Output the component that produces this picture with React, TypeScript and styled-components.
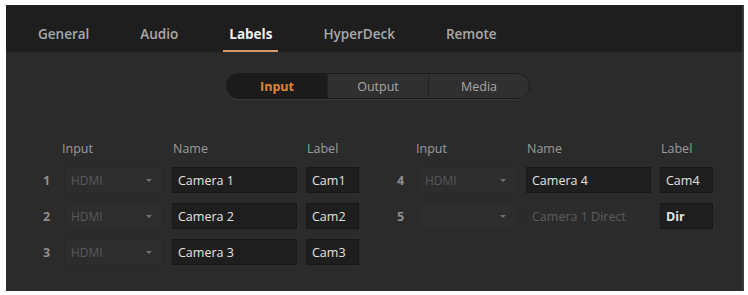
import React from "react";
import styled, { createGlobalStyle } from "styled-components";

const GlobalStyle = createGlobalStyle`
  html, body {
    margin: 0;
    padding: 0;
    background: #ffffff;
  }
  body {
    font-family: "Open Sans", "Liberation Sans", sans-serif;
  }
`;

const Panel = styled.div`
  margin: 5px 0 0 6px;
  width: 738px;
  height: 286px;
  background: #2b2b2b;
  border-right: 2px solid #3a3a3a;
  box-sizing: border-box;
  display: flex;
  flex-direction: column;
`;

const TabBar = styled.div`
  height: 47px;
  background: #1e1e1e;
  display: flex;
  padding-left: 26px;
  gap: 39px;
`;

const Tab = styled.div<{ active?: boolean }>`
  box-sizing: border-box;
  height: 47px;
  padding: 22px 6px 0;
  line-height: 14px;
  font-size: 13.5px;
  font-weight: ${(p) => (p.active ? 700 : 600)};
  color: ${(p) => (p.active ? "#f2f2f2" : "#a9a9a9")};
  border-bottom: 2px solid ${(p) => (p.active ? "#d69a68" : "transparent")};
`;

const Body = styled.div`
  display: flex;
  flex-direction: column;
`;

const SegmentRow = styled.div`
  display: flex;
  justify-content: center;
  padding-left: 8px;
  margin-top: 21px;
`;

const Segmented = styled.div`
  display: flex;
  height: 24px;
  border-radius: 12px;
  background: #303030;
  border: 1px solid #1b1b1b;
  overflow: hidden;
  box-shadow: 0 1px 0 #363636;
`;

const Segment = styled.div<{ active?: boolean }>`
  width: 100px;
  display: flex;
  align-items: center;
  justify-content: center;
  font-size: 12.5px;
  font-weight: ${(p) => (p.active ? 700 : 400)};
  color: ${(p) => (p.active ? "#e8822e" : "#a8a8a8")};
  background: ${(p) => (p.active ? "#1b1b1b" : "transparent")};
  & + & {
    border-left: 1px solid #232323;
  }
`;

const Table = styled.div`
  display: flex;
  gap: 35px;
  padding-left: 34px;
  margin-top: 42px;
`;

const Group = styled.div`
  display: grid;
  grid-template-columns: 15px 99px 125px 53px;
  column-gap: 9px;
  row-gap: 10px;
  grid-auto-rows: 26px;
  grid-template-rows: 16px;
`;

const ColHead = styled.div<{ col: number }>`
  grid-column: ${(p) => p.col};
  font-size: 12.5px;
  line-height: 16px;
  color: #9c9c9c;
  margin-left: ${(p) => (p.col === 2 ? "-2px" : "1px")};
  margin-bottom: 4px;
`;

const Num = styled.div`
  grid-column: 1;
  display: flex;
  align-items: center;
  padding-left: 3px;
  font-size: 12.5px;
  font-weight: 700;
  color: #8e8e8e;
`;

const Dropdown = styled.div`
  display: flex;
  align-items: center;
  justify-content: space-between;
  padding: 0 10px 0 6px;
  background: #2d2d2d;
  border: 1px solid #282828;
  font-size: 12px;
  color: #585858;
`;

const Arrow = styled.span`
  width: 0;
  height: 0;
  border-left: 3px solid transparent;
  border-right: 3px solid transparent;
  border-top: 3px solid #707070;
`;

const Field = styled.div<{ dim?: boolean; strong?: boolean }>`
  display: flex;
  align-items: center;
  padding-left: 5px;
  box-sizing: border-box;
  font-size: 12.5px;
  font-weight: ${(p) => (p.strong ? 700 : 400)};
  color: ${(p) => (p.dim ? "#5c5c5c" : "#e4e4e4")};
  background: ${(p) => (p.dim ? "#2c2c2c" : "#1e1e1e")};
  border: 1px solid ${(p) => (p.dim ? "#272727" : "#181818")};
`;

type Row = { n: number; src: string; name: string; label: string; dimName?: boolean; strong?: boolean };

const left: Row[] = [
  { n: 1, src: "HDMI", name: "Camera 1", label: "Cam1" },
  { n: 2, src: "HDMI", name: "Camera 2", label: "Cam2" },
  { n: 3, src: "HDMI", name: "Camera 3", label: "Cam3" },
];

const right: Row[] = [
  { n: 4, src: "HDMI", name: "Camera 4", label: "Cam4" },
  { n: 5, src: "", name: "Camera 1 Direct", label: "Dir", dimName: true, strong: true },
];

const InputGroup: React.FC<{ rows: Row[] }> = ({ rows }) => (
  <Group>
    <ColHead col={2}>Input</ColHead>
    <ColHead col={3}>Name</ColHead>
    <ColHead col={4}>Label</ColHead>
    {rows.map((r) => (
      <React.Fragment key={r.n}>
        <Num>{r.n}</Num>
        <Dropdown>
          <span>{r.src}</span>
          <Arrow />
        </Dropdown>
        <Field dim={r.dimName}>{r.name}</Field>
        <Field strong={r.strong}>{r.label}</Field>
      </React.Fragment>
    ))}
  </Group>
);

export default function App() {
  const tabs = ["General", "Audio", "Labels", "HyperDeck", "Remote"];
  return (
    <>
      <GlobalStyle />
      <Panel>
        <TabBar>
          {tabs.map((t) => (
            <Tab key={t} active={t === "Labels"}>
              {t}
            </Tab>
          ))}
        </TabBar>
        <Body>
          <SegmentRow>
            <Segmented>
              <Segment active>Input</Segment>
              <Segment>Output</Segment>
              <Segment>Media</Segment>
            </Segmented>
          </SegmentRow>
          <Table>
            <InputGroup rows={left} />
            <InputGroup rows={right} />
          </Table>
        </Body>
      </Panel>
    </>
  );
}
